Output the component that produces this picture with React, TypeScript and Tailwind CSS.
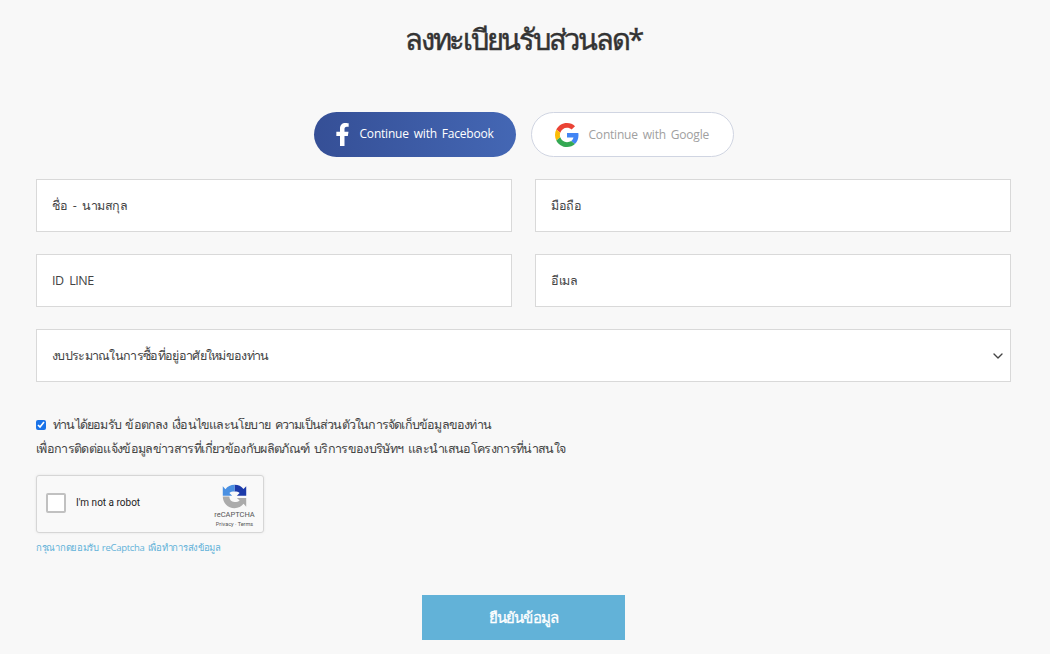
import { ChevronDown } from 'lucide-react';

const font = "font-['Open_Sans','Noto_Sans','DejaVu_Sans',sans-serif]";

function Field({ label }: { label: string }) {
  return (
    <div className="flex h-[53px] flex-1 items-center border border-[#d9d9d9] bg-white px-[15px] pt-[1px] text-[12.5px] tracking-[-0.5px] text-[#444] [word-spacing:3px]">
      {label}
    </div>
  );
}

function GoogleIcon() {
  return (
    <svg viewBox="0 0 48 48" className="h-[24px] w-[24px]">
      <path fill="#EA4335" d="M24 9.5c3.54 0 6.71 1.22 9.21 3.6l6.85-6.85C35.9 2.38 30.47 0 24 0 14.62 0 6.51 5.38 2.56 13.22l7.98 6.19C12.43 13.72 17.74 9.5 24 9.5z" />
      <path fill="#4285F4" d="M46.98 24.55c0-1.57-.15-3.09-.38-4.55H24v9.02h12.94c-.58 2.96-2.26 5.48-4.78 7.18l7.73 6c4.51-4.18 7.09-10.36 7.09-17.65z" />
      <path fill="#FBBC05" d="M10.53 28.59c-.48-1.45-.76-2.99-.76-4.59s.27-3.14.76-4.59l-7.98-6.19C.92 16.46 0 20.12 0 24c0 3.88.92 7.54 2.56 10.78l7.97-6.19z" />
      <path fill="#34A853" d="M24 48c6.48 0 11.93-2.13 15.89-5.81l-7.73-6c-2.15 1.45-4.92 2.3-8.16 2.3-6.26 0-11.57-4.22-13.47-9.91l-7.98 6.19C6.51 42.62 14.62 48 24 48z" />
    </svg>
  );
}

function RecaptchaLogo() {
  return (
    <svg viewBox="0 0 32 32" className="h-[25px] w-[25px]">
      <path fill="#1c3aa9" d="M16 1 C21 1 25 3 27.5 6.5 L31 3 L31 15 L19 15 L22.6 11.4 C21 10 19 9.5 16 9.5 Z" />
      <path fill="#4a90e2" d="M16 1 C11 1 7 3.2 4.4 6.6 L1 3 L1 15 L13 15 L9.4 11.4 C11 10 13 9.5 16 9.5 Z" />
      <path fill="#ababab" d="M1 16 C1 24 7.5 31 16 31 C21 31 25 28.8 27.6 25.4 L31 29 L31 18 L19 18 L22.6 21 C21 22.5 19 23 16 23 C12 23 9.5 20 9.5 16 Z" />
    </svg>
  );
}

export default function App() {
  return (
    <div className={`h-[654px] w-[1050px] overflow-hidden bg-[#f8f8f8] pr-[39px] pl-[36px] text-[#333] ${font}`}>
      <h1 className="pt-[18px] text-center text-[29px] leading-[42px] font-normal tracking-[-2.25px] text-[#333] [-webkit-text-stroke:0.5px_#333]">
        ลงทะเบียนรับส่วนลด*
      </h1>

      <div className="mt-[52px] flex justify-center gap-[15px]">
        <div className="flex h-[45px] w-[202px] items-center rounded-full bg-gradient-to-r from-[#354f96] to-[#4467b4] pl-[21px] text-[12px] tracking-[-0.2px] text-white [word-spacing:2px]">
          <svg viewBox="0 0 320 512" className="h-[23px] w-[15px] fill-white">
            <path d="M279.14 288l14.22-92.66h-88.91v-60.13c0-25.35 12.42-50.06 52.24-50.06h40.42V6.26S260.43 0 225.36 0c-73.22 0-121.08 44.38-121.08 124.72v70.62H22.89V288h81.39v224h100.17V288z" />
          </svg>
          <span className="mb-[2px] ml-[10px]">Continue with Facebook</span>
        </div>
        <div className="flex h-[45px] w-[203px] items-center rounded-full border border-[#d0d5e2] bg-white pl-[23px] text-[12px] tracking-[-0.2px] text-[#a0a0a0] [word-spacing:2px]">
          <GoogleIcon />
          <span className="ml-[10px] pt-[1px]">Continue with Google</span>
        </div>
      </div>

      <div className="mt-[22px] flex flex-col gap-[22px]">
        <div className="flex gap-[23px]">
          <Field label="ชื่อ - นามสกุล" />
          <Field label="มือถือ" />
        </div>
        <div className="flex gap-[23px]">
          <Field label="ID LINE" />
          <Field label="อีเมล" />
        </div>
        <div className="flex h-[53px] items-center justify-between border border-[#d9d9d9] bg-white pr-[4px] pl-[15px] text-[12.5px] tracking-[-0.69px] text-[#444] [word-spacing:2px]">
          <span className="pt-[1px]">งบประมาณในการซื้อที่อยู่อาศัยใหม่ของท่าน</span>
          <ChevronDown className="h-[16px] w-[16px] text-[#444]" strokeWidth={2} />
        </div>
      </div>

      <div className="mt-[31px] text-[12.5px] leading-[24px] text-[#444] [word-spacing:2px]">
        <div className="flex items-center gap-[7px] tracking-[-0.8px]">
          <input type="checkbox" defaultChecked className="h-[10px] w-[10px] accent-[#1a73e8]" />
          <span>ท่านได้ยอมรับ ข้อตกลง เงื่อนไขและนโยบาย ความเป็นส่วนตัวในการจัดเก็บข้อมูลของท่าน</span>
        </div>
        <div className="tracking-[-0.66px]">เพื่อการติดต่อแจ้งข้อมูลข่าวสารที่เกี่ยวข้องกับผลิตภัณฑ์ บริการของบริษัทฯ และนำเสนอโครงการที่น่าสนใจ</div>
      </div>

      <div className="mt-[14px] flex h-[58px] w-[228px] items-center rounded-[3px] border border-[#d6d6d6] bg-[#f9f9f9] pl-[9px] font-['Roboto',sans-serif] shadow-[0_0_3px_rgba(0,0,0,0.08)]">
        <div className="mb-[3px] flex items-center">
          <div className="h-[20px] w-[20px] rounded-[2px] border-2 border-[#c1c1c1] bg-white" />
          <span className="ml-[10px] text-[10px] text-[#222]">I'm not a robot</span>
        </div>
        <div className="ml-auto flex w-[52px] flex-col items-center pt-[3px] pr-[5px]">
          <RecaptchaLogo />
          <span className="mt-[1px] text-[7.5px] leading-[10px] text-[#555]">reCAPTCHA</span>
          <span className="text-[5.5px] leading-[8px] text-[#555]">Privacy · Terms</span>
        </div>
      </div>

      <div className="mt-[3px] text-[9.5px] leading-[24px] tracking-[-0.3px] text-[#62b2d8] [word-spacing:1px]">กรุณากดยอมรับ reCaptcha เพื่อทำการส่งข้อมูล</div>

      <div className="mt-[35px] flex justify-center">
        <div className="flex h-[45px] w-[203px] items-center justify-center bg-[#62b2d8] text-[15px] tracking-[-0.9px] text-white [-webkit-text-stroke:0.3px_#fff]">
          ยืนยันข้อมูล
        </div>
      </div>
    </div>
  );
}
